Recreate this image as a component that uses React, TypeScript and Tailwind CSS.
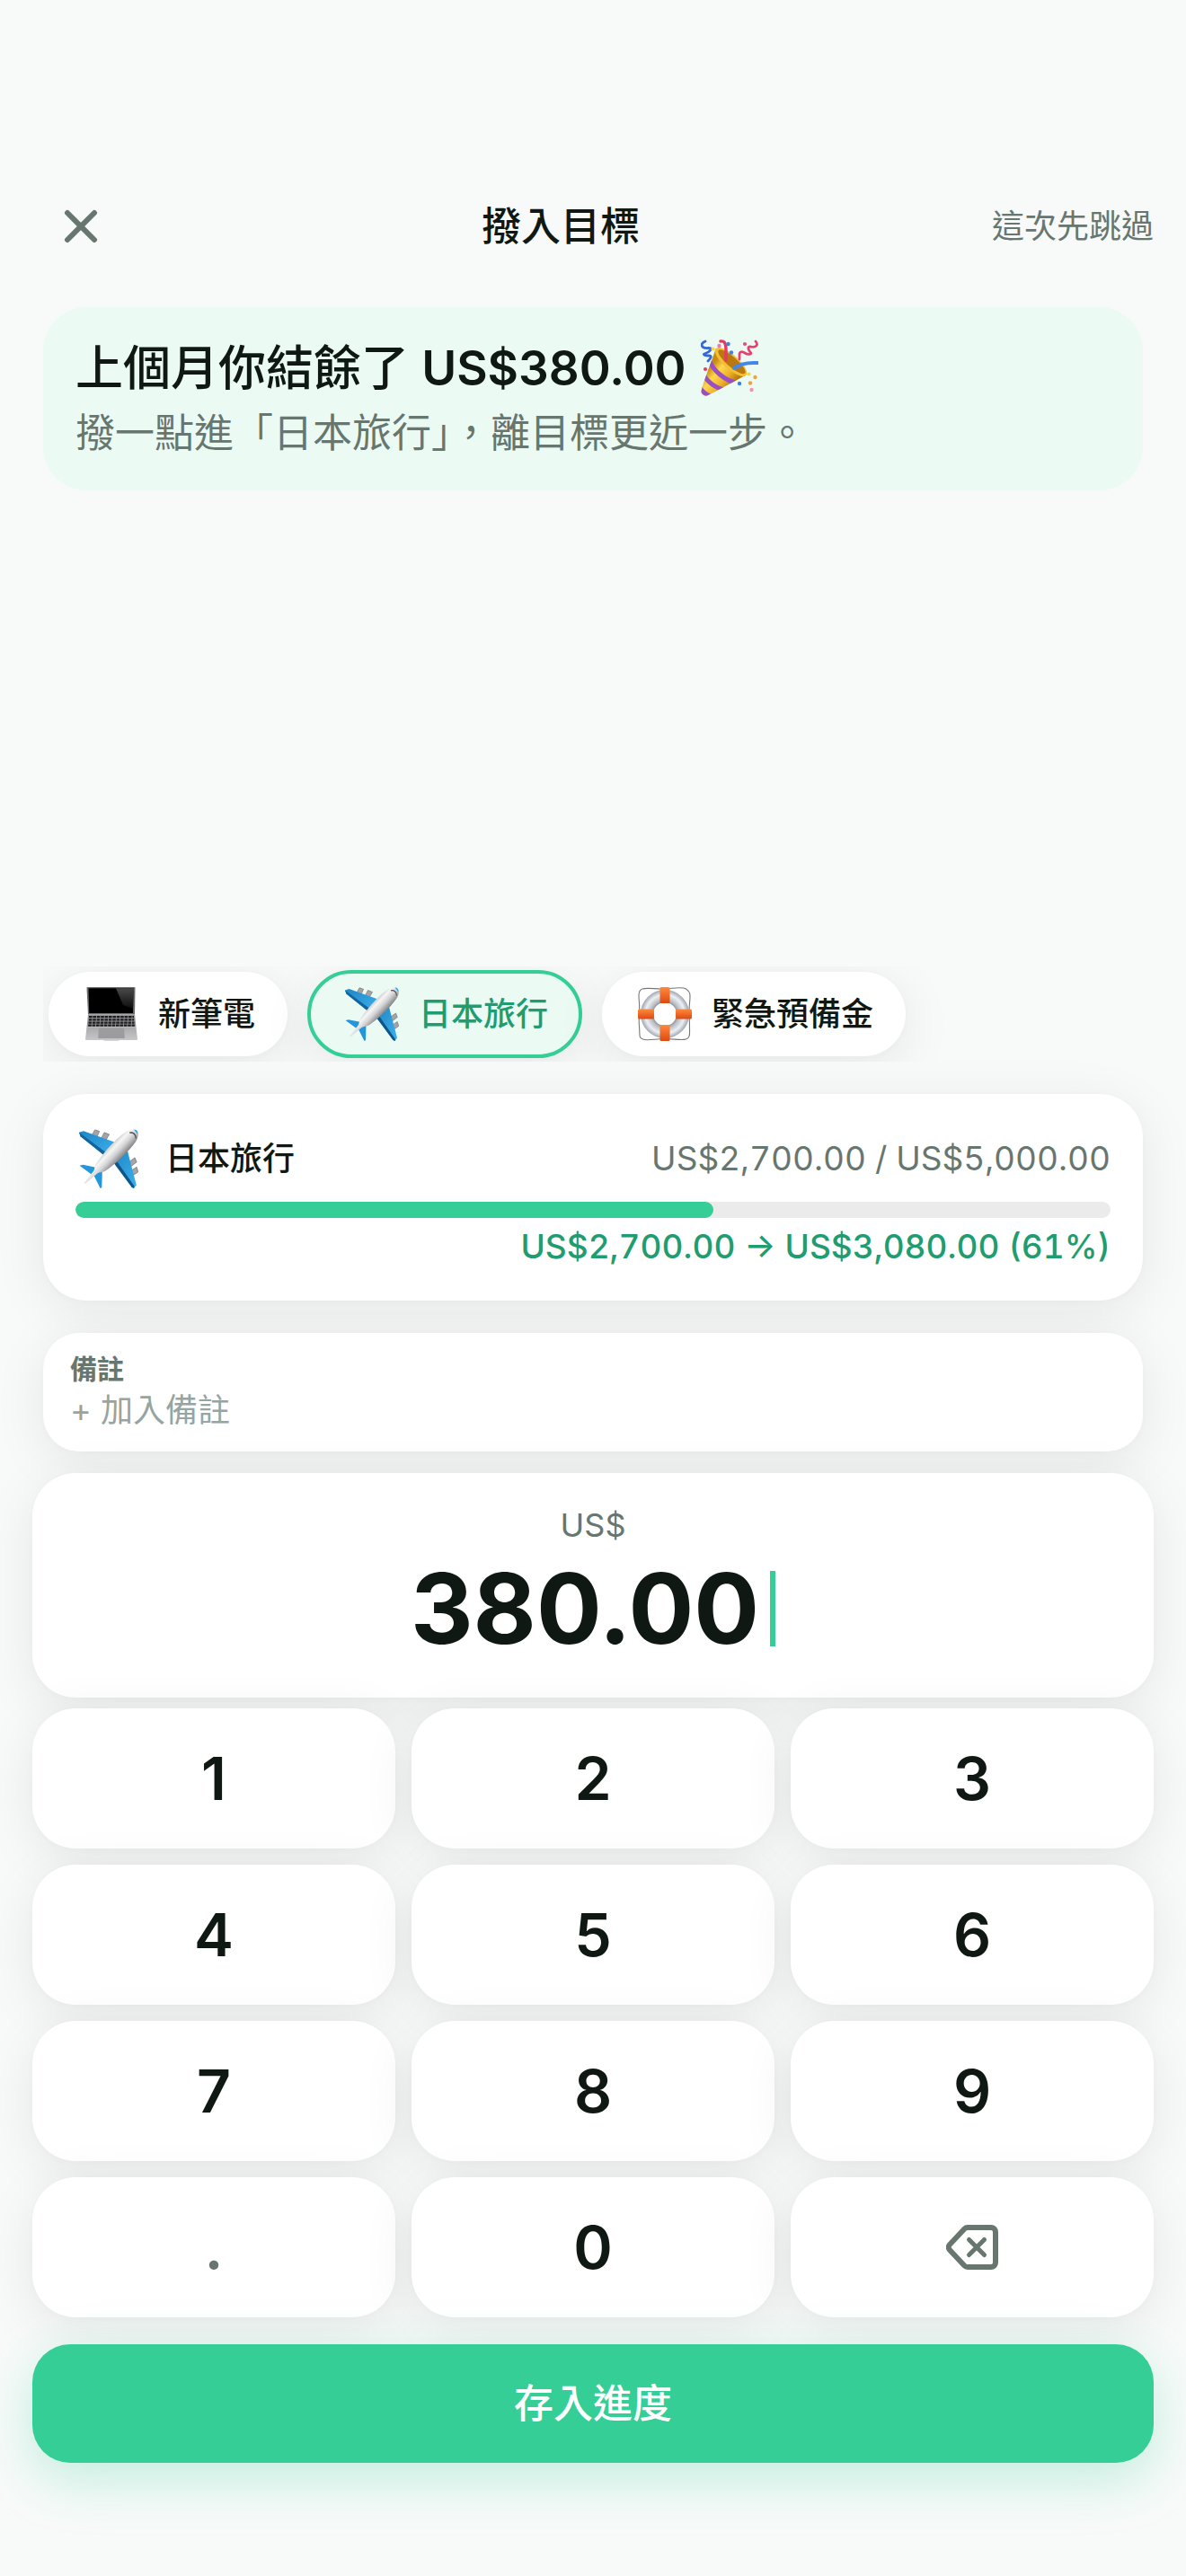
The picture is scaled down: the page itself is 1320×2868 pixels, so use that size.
import { useState } from "react"
import { X } from "lucide-react"
import clsx from "clsx"

const FONT = "font-['Inter','Noto_Sans_CJK_TC',sans-serif]"
const CARD = "bg-white shadow-[0_12px_60px_rgba(16,26,21,0.08),0_2px_8px_rgba(16,26,21,0.02)]"

type IconProps = { className?: string }

function LaptopIcon({ className }: IconProps) {
  return (
    <svg viewBox="0 0 60 60" className={className} aria-hidden="true">
      <defs>
        <linearGradient id="palm" x1="0" y1="0" x2="0" y2="1">
          <stop offset="0" stopColor="#a9a9ab" />
          <stop offset="1" stopColor="#c9c9cb" />
        </linearGradient>
        <linearGradient id="glare" x1="0" y1="0" x2="0" y2="1">
          <stop offset="0" stopColor="#4a4a4a" />
          <stop offset="1" stopColor="#0c0c0c" />
        </linearGradient>
      </defs>
      <path d="M3.500 0h52a1 1 0 0 1 1 1L56 30.500H4L2.500 1a1 1 0 0 1 1-1z" fill="#6d6d70" />
      <path d="M4.500 1.200h50L54 29H5.200z" fill="#000" />
      <path d="M35 1.200h19.500L54 24 43 20z" fill="url(#glare)" />
      <path d="M4 30.500h52l1.500 14h-55z" fill="#98989b" />
      <path d="M5 33.200h50M4.800 36.400h50.400M4.500 39.600h51M4.200 42.600h51.600" stroke="#1c1c1e" strokeWidth="2.200" strokeDasharray="3.600 .8" />
      <path d="M2.500 44.500h55L59 58a1 1 0 0 1-1 1H39l-1 .8H22l-1-.8H2a1 1 0 0 1-1-1z" fill="url(#palm)" />
      <path d="M16 45.500h28l.8 11.500H15.200z" fill="#9c9c9f" />
    </svg>
  )
}

function PlaneIcon({ className }: IconProps) {
  return (
    <svg viewBox="0 0 60 60" className={className} aria-hidden="true">
      <defs>
        <linearGradient id="hull" gradientUnits="userSpaceOnUse" x1="26" y1="16" x2="42" y2="31">
          <stop offset="0" stopColor="#a2a2a4" />
          <stop offset=".4" stopColor="#f6f6f6" />
          <stop offset=".65" stopColor="#d4d4d6" />
          <stop offset="1" stopColor="#7d7d80" />
        </linearGradient>
        <linearGradient id="wing" x1="0" y1="0" x2="1" y2="1">
          <stop offset="0" stopColor="#1f86c4" />
          <stop offset="1" stopColor="#3db2f0" />
        </linearGradient>
      </defs>
      <g fill="#a5a5a8" stroke="#77777a" strokeWidth=".7">
        <path d="M16 .8l4.500 1.500-2.500 6-5-2z" />
        <path d="M25.500 3.500l5 2-3.500 6-4.500-2z" />
        <path d="M56.500 29l1.800 4.500-6 4.500-2-4.500z" />
        <path d="M58.300 38.500l1.400 5-6 4-1.400-5z" />
      </g>
      <path d="M0 3.500L4.500 2 38 14 27 28 1.500 7.500z" fill="url(#wing)" />
      <path d="M0 3.500l1.500 4L27 28l2-3z" fill="#14639a" />
      <path d="M49 22l9 34.500-2.500 3.500-2-1L35 34z" fill="url(#wing)" />
      <path d="M35 34l18.500 25 2 1 .5-2-18.500-26.500z" fill="#0f5588" />
      <path d="M.5 37L4 36.200l14 2.800-4.500 7.500z" fill="#2496da" />
      <path d="M23.500 41l-.5 18-1.500 1L15 47z" fill="#2496da" />
      <path d="M48.500 2.200C52 .3 56-.2 58 1.200s2.400 5.300.6 9.300C54 19 38 35 26.500 42.500 23.500 44 21 43.500 18.500 45L6 55.500l-1-.7L15 42c1-2 .5-4 2-6.500C24.500 24 39.500 7 48.500 2.200z" fill="url(#hull)" />
      <path d="M55.500.6c1.500 0 2.500.3 3.200 1.300.6.8.8 2 .7 3.300z" fill="#2fa3e6" />
      <path d="M51 3.800c3.500-.8 6.500 1.200 6.500 5.700" fill="none" stroke="#505054" strokeWidth="1.200" />
    </svg>
  )
}

function LifebuoyIcon({ className }: IconProps) {
  return (
    <svg viewBox="0 0 60 60" className={className} aria-hidden="true">
      <defs>
        <radialGradient id="tube" gradientUnits="userSpaceOnUse" cx="30" cy="30" r="27">
          <stop offset=".44" stopColor="#7d828c" />
          <stop offset=".58" stopColor="#b9bdc4" />
          <stop offset=".8" stopColor="#eceff3" />
          <stop offset="1" stopColor="#a0a6b0" />
        </radialGradient>
        <linearGradient id="strap" x1="0" y1="0" x2="0" y2="1">
          <stop offset="0" stopColor="#ff8a3c" />
          <stop offset="1" stopColor="#dd4a12" />
        </linearGradient>
      </defs>
      <path d="M26 2C18 2 10 .5 5 2S.8 10 1.500 18s-1 16 0 26-1 12 4 14 14-.5 24-.5 19 2 24 .5 4-6 4-14-1-16 0-26 1-13-4-16S38 2 26 2z" fill="none" stroke="#77777a" strokeWidth="1.100" />
      <circle cx="30" cy="30" r="20" fill="none" stroke="url(#tube)" strokeWidth="14" />
      <g fill="url(#strap)">
        <rect x="24.500" y="0" width="11" height="18" rx="1.500" />
        <rect x="24.500" y="42" width="11" height="18" rx="1.500" />
        <rect x="0" y="24.500" width="18" height="11" rx="1.500" />
        <rect x="42" y="24.500" width="18" height="11" rx="1.500" />
      </g>
    </svg>
  )
}

function PartyIcon({ className }: IconProps) {
  return (
    <svg viewBox="0 0 64 64" className={className} aria-hidden="true">
      <defs>
        <linearGradient id="cone" gradientUnits="userSpaceOnUse" x1="8" y1="34" x2="32" y2="54">
          <stop offset="0" stopColor="#c98d12" />
          <stop offset=".3" stopColor="#ffd84f" />
          <stop offset=".65" stopColor="#f0b429" />
          <stop offset="1" stopColor="#b97c0c" />
        </linearGradient>
        <clipPath id="coneClip">
          <path d="M16.500 10.500C11 27 4 44 .6 57c-.8 4 3 6.800 7 5.300C20 56 37 47 50.500 39.500z" />
        </clipPath>
      </defs>
      <path d="M16.500 10.500C11 27 4 44 .6 57c-.8 4 3 6.800 7 5.300C20 56 37 47 50.500 39.500z" fill="url(#cone)" />
      <g clipPath="url(#coneClip)" fill="none" stroke="#9a4fc4" strokeWidth="5">
        <path d="M9 22c4 12 18 25 34 27" />
        <path d="M3 39c4 8 13 15 24 17" />
        <path d="M-1 53c2 4 6 8 12 10" />
      </g>
      <ellipse cx="33.500" cy="25" rx="22.500" ry="8" transform="rotate(41 33.500 25)" fill="#f2bf35" />
      <ellipse cx="34.500" cy="24.800" rx="19.500" ry="5.500" transform="rotate(41 34.500 24.800)" fill="#b9790f" />
      <g fill="none" strokeLinecap="round">
        <path d="M5 2C-2 5 1 10 8 9.500s1 5-3 6 0 2.500 4 2.500 2 3-1 6" stroke="#3767d6" strokeWidth="2.800" />
        <path d="M22 2c5-1 6 4 6 9v12" stroke="#e63963" strokeWidth="3.400" />
        <path d="M61 2c4 5-1 7-5 6s-4 3-1 6-3 3-6 1-6-2-6 2v5" stroke="#e8416f" strokeWidth="2.800" />
        <path d="M37 32c7-6 16-6.500 26-6" stroke="#4287ec" strokeWidth="4" />
      </g>
      <circle cx="30.500" cy="5" r="2.200" fill="#3c82e8" />
      <circle cx="34" cy="14.500" r="2.200" fill="#3c82e8" />
      <circle cx="43" cy="49" r="2.200" fill="#3c82e8" />
      <circle cx="20.500" cy="7" r="2.200" fill="#f178a5" />
      <circle cx="56.500" cy="56" r="2.200" fill="#f590b8" />
      <circle cx="49" cy="5" r="2.100" fill="#ea4c77" />
      <circle cx="5" cy="33" r="2.100" fill="#e63963" />
      <circle cx="13.500" cy="10.500" r="2.100" fill="#f6d93c" />
      <circle cx="53.500" cy="38.500" r="2.100" fill="#f6d93c" />
      <circle cx="60.500" cy="42" r="2.200" fill="#f7a03a" />
      <circle cx="55" cy="48.500" r="2.200" fill="#f7a03a" />
    </svg>
  )
}

function BackspaceIcon({ className }: IconProps) {
  return (
    <svg viewBox="0 0 58 50" className={className} fill="none" stroke="currentColor" strokeWidth="6" strokeLinecap="round" strokeLinejoin="round" aria-hidden="true">
      <path d="M24 3h26a5 5 0 0 1 5 5v34a5 5 0 0 1-5 5H24a5 5 0 0 1-3.600-1.500L4 28a4.300 4.300 0 0 1 0-6L20.400 4.500A5 5 0 0 1 24 3z" />
      <path d="M25.500 16.500l17 17M42.500 16.500l-17 17" strokeWidth="5" />
    </svg>
  )
}

const goals = [
  { id: "laptop", name: "新筆電", Icon: LaptopIcon },
  { id: "japan", name: "日本旅行", Icon: PlaneIcon },
  { id: "fund", name: "緊急預備金", Icon: LifebuoyIcon },
]

const keys = ["1", "2", "3", "4", "5", "6", "7", "8", "9", ".", "0"]

export default function App() {
  const [selected, setSelected] = useState("japan")
  const progress = (3080 / 5000) * 100

  return (
    <main className={clsx(FONT, "flex min-h-screen flex-col bg-[#f8faf9] px-9 pt-[186px] pb-[126px] text-[#101814] antialiased")}>
      {/* ヘッダー */}
      <header className="flex h-[132px] items-center justify-between">
        <button type="button" aria-label="關閉" className="flex h-[108px] w-[108px] items-center justify-center text-[#687670]">
          <X className="size-[60px]" strokeWidth={2.4} />
        </button>
        <h1 className="text-[44px] font-medium">撥入目標</h1>
        <button type="button" className="text-[36px] text-[#687670]">這次先跳過</button>
      </header>

      {/* 先月の残額バナー */}
      <section className="mx-3 mt-6 rounded-[48px] bg-[#ebfbf4] px-9 py-8">
        <h2 className="flex items-center gap-4 text-[53px] leading-[72px] font-medium">
          <span>
            上個月你結餘了 <span className="font-semibold">US$380.00</span>
          </span>
          <PartyIcon className="size-16" />
        </h2>
        <p className="mt-1 text-[44px] leading-[64px] text-[#687670]">撥一點進「日本旅行」，離目標更近一步。</p>
      </section>

      <div className="mt-auto flex flex-col">
        {/* 目標の切り替え */}
        <div className="mx-3 flex gap-6 overflow-x-auto p-[6px]">
          {goals.map(({ id, name, Icon }) => (
            <button
              key={id}
              type="button"
              aria-pressed={selected === id}
              onClick={() => setSelected(id)}
              className={clsx(
                "flex h-[94px] shrink-0 items-center gap-[22px] rounded-full px-9 text-[36px] font-medium",
                CARD,
                selected === id && "bg-[#ebfbf4]! text-[#1f9d70] outline-4 -outline-offset-2 outline-[#34ce96]"
              )}
            >
              <Icon className="ml-1 size-[60px]" />
              {name}
            </button>
          ))}
        </div>

        {/* 進捗カード */}
        <section className={clsx(CARD, "mx-3 mt-9 rounded-[48px] p-9")}>
          <div className="flex h-[72px] items-center justify-between text-[36px]">
            <div className="flex items-center gap-[30px] font-medium">
              <PlaneIcon className="ml-1 size-[66px]" />
              日本旅行
            </div>
            <span className="text-[37px] text-[#687670] tabular-nums">US$2,700.00 / US$5,000.00</span>
          </div>
          <div role="progressbar" aria-label="日本旅行" aria-valuenow={61} className="mt-3 h-[18px] overflow-hidden rounded-full bg-[#ebebeb]">
            <div className="h-full rounded-full bg-[#34ce96]" style={{ width: `${progress}%` }} />
          </div>
          <p className="mt-2 text-right text-[37px] leading-[48px] font-medium text-[#1f9d70] tabular-nums">US$2,700.00 → US$3,080.00 (61%)</p>
        </section>

        {/* 備考 */}
        <div className={clsx(CARD, "mx-3 mt-9 flex flex-col rounded-[40px] px-[30px] py-5")}>
          <label htmlFor="note" className="text-[30px] leading-[40px] font-bold text-[#687670]">備註</label>
          <input
            id="note"
            type="text"
            placeholder="+ 加入備註"
            className="h-[52px] w-full bg-transparent text-[36px] outline-none placeholder:text-[#98a49f]"
          />
        </div>

        {/* 金額 */}
        <section className={clsx(CARD, "mt-6 rounded-[48px] py-8 text-center")}>
          <p className="text-[36px] leading-[52px] text-[#687670]">US$</p>
          <p className="flex items-center justify-center gap-3 text-[108px] leading-[134px] font-bold">
            380.00
            <span className="h-[84px] w-[6px] bg-[#34ce96]" />
          </p>
        </section>

        {/* テンキー */}
        <div className="mt-3 grid grid-cols-3 gap-[18px]">
          {keys.map((k) => (
            <button
              key={k}
              type="button"
              className={clsx(CARD, "h-[156px] rounded-[48px] text-[66px] font-semibold", k === "." && "text-[#687670]")}
            >
              {k}
            </button>
          ))}
          <button type="button" aria-label="刪除" className={clsx(CARD, "flex h-[156px] items-center justify-center rounded-[48px] text-[#687670]")}>
            <BackspaceIcon className="h-[50px] w-[58px]" />
          </button>
        </div>

        <button
          type="button"
          className="mt-[30px] h-[132px] rounded-[42px] bg-[#34ce96] text-[44px] font-medium text-white shadow-[0_18px_60px_rgba(52,206,150,0.28)]"
        >
          存入進度
        </button>
      </div>
    </main>
  )
}
